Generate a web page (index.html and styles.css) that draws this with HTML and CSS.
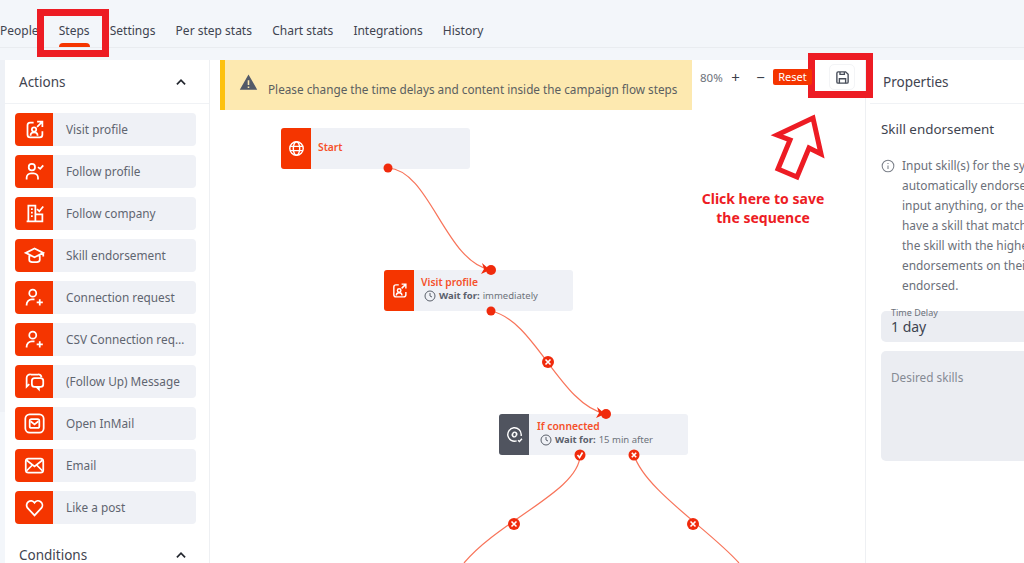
FILE: index.html
```html
<!DOCTYPE html>
<html lang="en">
<head>
  <meta charset="UTF-8">
  <meta name="viewport" content="width=device-width, initial-scale=1.0">
  <title>Campaign steps</title>
  <link rel="stylesheet" href="styles.css">
</head>
<body>
  <svg class="defs" width="0" height="0">
    <symbol id="i-visit" viewBox="0 0 24 24">
      <path d="M11 4H7a3 3 0 0 0-3 3v11a3 3 0 0 0 3 3h11a3 3 0 0 0 3-3v-4M15 3h6v6M21 3l-6 6"/>
      <circle cx="11.5" cy="12" r="2.5"/><path d="M7.500 19c0-5 8-5 8 0"/>
    </symbol>
    <symbol id="i-follow" viewBox="0 0 24 24">
      <circle cx="9" cy="7" r="3.600"/><path d="M3 21v-2a5 5 0 0 1 5-5h3a5 5 0 0 1 5 5v2M16 7l2.500 2L22 5"/>
    </symbol>
    <symbol id="i-company" viewBox="0 0 24 24">
      <path d="M3 21h19M5 21V3h8v18M13 13h8v8M8 7h2M8 11h2M8 15h2M15 7l2.500 2.500L22 4"/>
    </symbol>
    <symbol id="i-skill" viewBox="0 0 24 24">
      <path d="M12 4L2 9l10 5 10-5zM6 12v5c0 3.500 12 3.500 12 0v-5M22 9v4"/>
    </symbol>
    <symbol id="i-connect" viewBox="0 0 24 24">
      <circle cx="10" cy="7" r="4"/><path d="M3 21v-1a6 6 0 0 1 6-6h3M18 14v7M14.500 17.500h7"/>
    </symbol>
    <symbol id="i-message" viewBox="0 0 24 24">
      <path d="M8 4h8a4 4 0 0 1 4 3"/><rect x="9" y="8" width="13" height="10" rx="3"/><path d="M6 15l-3 3V8a4 4 0 0 1 5-4M17 18v3l-3-3"/>
    </symbol>
    <symbol id="i-inmail" viewBox="0 0 24 24">
      <rect x="1.500" y="1.500" width="21" height="21" rx="5"/><rect x="6.500" y="7" width="11" height="10" rx="2"/><path d="M7.500 9.500L12 13l4.500-3.500"/>
    </symbol>
    <symbol id="i-email" viewBox="0 0 24 24">
      <rect x="2" y="4" width="20" height="16" rx="3"/><path d="M3 6l9 7 9-7M3 18l6-6M21 18l-6-6"/>
    </symbol>
    <symbol id="i-heart" viewBox="0 0 24 24">
      <path d="M12 21L4 12.500a5 5 0 0 1 8-6 5 5 0 0 1 8 6z"/>
    </symbol>
    <symbol id="i-globe" viewBox="0 0 24 24">
      <circle cx="12" cy="12" r="9.500"/><ellipse cx="12" cy="12" rx="4.500" ry="9.500"/><path d="M3 9h18M3 15h18"/>
    </symbol>
    <symbol id="i-link" viewBox="0 0 24 24">
      <path d="M15 21A9.500 9.500 0 1 1 21.500 12v2M17 20l2 2 3.500-4"/><path d="M10 14a3 3 0 0 1 0-4l1-1a3 3 0 0 1 4 4M14 10a3 3 0 0 1 0 4l-1 1a3 3 0 0 1-4-4"/>
    </symbol>
    <symbol id="i-clock" viewBox="0 0 24 24">
      <circle cx="12" cy="12" r="10"/><path d="M12 6v6l4 2"/>
    </symbol>
    <symbol id="i-chevron" viewBox="0 0 24 24">
      <path d="M5 16l7-7 7 7"/>
    </symbol>
  </svg>

  <nav class="tabs">
    <a>People</a>
    <a class="tab-active">Steps</a>
    <a>Settings</a>
    <a>Per step stats</a>
    <a>Chart stats</a>
    <a>Integrations</a>
    <a>History</a>
  </nav>

  <main class="layout">
    <div class="scroll-strip"></div>
    <aside class="sidebar">
      <header class="panel-head">
        <h2>Actions</h2>
        <svg class="chevron"><use href="#i-chevron"/></svg>
      </header>
      <ul class="action-list">
        <li class="action"><span class="action-icon"><svg><use href="#i-visit"/></svg></span><span class="action-name">Visit profile</span></li>
        <li class="action"><span class="action-icon"><svg><use href="#i-follow"/></svg></span><span class="action-name">Follow profile</span></li>
        <li class="action"><span class="action-icon"><svg><use href="#i-company"/></svg></span><span class="action-name">Follow company</span></li>
        <li class="action"><span class="action-icon"><svg><use href="#i-skill"/></svg></span><span class="action-name">Skill endorsement</span></li>
        <li class="action"><span class="action-icon"><svg><use href="#i-connect"/></svg></span><span class="action-name">Connection request</span></li>
        <li class="action"><span class="action-icon"><svg><use href="#i-connect"/></svg></span><span class="action-name">CSV Connection request</span></li>
        <li class="action"><span class="action-icon"><svg><use href="#i-message"/></svg></span><span class="action-name">(Follow Up) Message</span></li>
        <li class="action"><span class="action-icon"><svg><use href="#i-inmail"/></svg></span><span class="action-name">Open InMail</span></li>
        <li class="action"><span class="action-icon"><svg><use href="#i-email"/></svg></span><span class="action-name">Email</span></li>
        <li class="action"><span class="action-icon"><svg><use href="#i-heart"/></svg></span><span class="action-name">Like a post</span></li>
      </ul>
      <header class="panel-head conditions">
        <h2>Conditions</h2>
        <svg class="chevron"><use href="#i-chevron"/></svg>
      </header>
    </aside>

    <section class="canvas">
      <div class="canvas-top">
        <div class="banner">
          <svg class="banner-icon" viewBox="0 0 24 24"><path d="M12 2L1 21h22zM11 9v6h2V9zm0 8v2h2v-2z" fill-rule="evenodd"/></svg>
          <span>Please change the time delays and content inside the campaign flow steps</span>
        </div>
        <div class="zoom-bar">
          <span class="zoom-value">80%</span>
          <span class="zoom-btn">+</span>
          <span class="zoom-btn">&minus;</span>
          <span class="reset">Reset</span>
          <span class="save">
            <svg viewBox="0 0 24 24"><path d="M5 3h12l4 4v12a2 2 0 0 1-2 2H5a2 2 0 0 1-2-2V5a2 2 0 0 1 2-2z"/><path d="M7 21v-7h10v7M8 3v4h7V3"/></svg>
          </span>
        </div>
      </div>

      <svg class="edges" viewBox="210 60 814 503">
        <path d="M388 168C430 170 445 262 491 270"/>
        <path d="M491 311C535 320 560 405 606 414"/>
        <path d="M580 455C580 490 500 520 464 563"/>
        <path d="M634 455C645 490 710 530 739 563"/>
        <circle cx="388" cy="168" r="4.500"/>
        <circle cx="491" cy="270" r="5"/>
        <path class="edge-tip" d="M482 263l8 7-9 4 3-5z"/>
        <circle cx="491" cy="311" r="4.500"/>
        <circle cx="606" cy="414" r="5"/>
        <path class="edge-tip" d="M597 407l8 7-9 4 3-5z"/>
        <g class="edge-mark"><circle cx="548" cy="362" r="6"/><path d="M545.500 359.500l5 5M550.500 359.500l-5 5"/></g>
        <g class="edge-mark"><circle cx="580" cy="455" r="5.500"/><path d="M577.500 455l2 2.500 3-5"/></g>
        <g class="edge-mark"><circle cx="634" cy="455" r="5.500"/><path d="M631.800 452.800l4.400 4.400M636.200 452.800l-4.400 4.400"/></g>
        <g class="edge-mark"><circle cx="514" cy="524" r="6"/><path d="M511.500 521.500l5 5M516.500 521.500l-5 5"/></g>
        <g class="edge-mark"><circle cx="693" cy="524" r="6"/><path d="M690.500 521.500l5 5M695.500 521.500l-5 5"/></g>
      </svg>

      <div class="node node-start">
        <span class="node-icon"><svg><use href="#i-globe"/></svg></span>
        <div class="node-body"><div class="node-title">Start</div></div>
      </div>
      <div class="node node-visit">
        <span class="node-icon"><svg><use href="#i-visit"/></svg></span>
        <div class="node-body">
          <div class="node-title">Visit profile</div>
          <div class="node-wait"><svg><use href="#i-clock"/></svg><b>Wait for:</b>immediately</div>
        </div>
      </div>
      <div class="node node-connected">
        <span class="node-icon node-icon-dark"><svg><use href="#i-link"/></svg></span>
        <div class="node-body">
          <div class="node-title">If connected</div>
          <div class="node-wait"><svg><use href="#i-clock"/></svg><b>Wait for:</b>15 min after</div>
        </div>
      </div>

      <svg class="callout-arrow" viewBox="0 0 60 76"><path d="M44 5L8 22l13 5-12 29 19 8 12-29 12 6z"/></svg>
      <p class="callout-text">Click here to save<br>the sequence</p>
    </section>

    <aside class="properties">
      <header class="panel-head">
        <h2>Properties</h2>
      </header>
      <div class="prop-body">
        <h3>Skill endorsement</h3>
        <div class="prop-help">
          <svg class="info" viewBox="0 0 24 24"><circle cx="12" cy="12" r="10"/><path d="M12 11v6M12 7v1.500"/></svg>
          <p>Input skill(s) for the system to<br>automatically endorse. If you don't<br>input anything, or the profile doesn't<br>have a skill that matches, we'll pick<br>the skill with the highest number of<br>endorsements on their profile to be<br>endorsed.</p>
        </div>
        <div class="field field-delay">
          <label>Time Delay</label>
          <span>1 day</span>
        </div>
        <div class="field field-skills">Desired skills</div>
      </div>
    </aside>
  </main>

  <div class="highlight highlight-tab"></div>
  <div class="highlight highlight-save"></div>
</body>
</html>
```

FILE: styles.css
```css
:root {
  --orange: #f53500;
  --node-bg: #eff1f6;
  --ink: #3f4450;
  --muted: #5f6570;
  --red: #ed1c24;
}

* {
  box-sizing: border-box;
}

html,
body {
  margin: 0;
  padding: 0;
}

body {
  position: relative;
  width: 1024px;
  height: 563px;
  overflow: hidden;
  background: #f3f6fa;
  color: var(--ink);
  font-family: "Noto Sans", "Open Sans", sans-serif;
}

.defs {
  position: absolute;
}

.tabs {
  display: flex;
  gap: 20.200px;
  height: 48px;
  border-bottom: 1px solid #e9ecf0;
  font-size: 12px;
  line-height: 17px;
  padding-top: 22px;
}

.tabs a {
  position: relative;
  white-space: nowrap;
}

.tab-active::after {
  content: "";
  position: absolute;
  left: 0;
  right: 0;
  top: 21px;
  height: 4px;
  border-radius: 4px 4px 0 0;
  background: var(--orange);
}

.layout {
  display: flex;
  height: 503px;
  margin-top: 12px;
  padding-left: 5px;
  position: relative;
}

.scroll-strip {
  position: absolute;
  left: 0;
  top: 0;
  width: 5px;
  height: 352px;
  background: #eef1f6;
}

.sidebar {
  width: 205px;
  flex: none;
  background: #fff;
  border-right: 1px solid #eef0f3;
  overflow: hidden;
}

.panel-head {
  display: flex;
  align-items: center;
  justify-content: space-between;
  height: 44px;
  padding: 0 21px 0 14px;
  border-bottom: 1px solid #f0f2f5;
}

.panel-head h2 {
  margin: 0;
  font-size: 13.500px;
  font-weight: 400;
}

.chevron {
  width: 14px;
  height: 14px;
  fill: none;
  stroke: #23272f;
  stroke-width: 3;
}

.action-list {
  list-style: none;
  margin: 0;
  padding: 9px 13px 0 10px;
}

.action {
  display: flex;
  height: 33px;
  margin-bottom: 9px;
  border-radius: 4px;
  background: var(--node-bg);
  overflow: hidden;
}

.action-icon {
  flex: none;
  display: flex;
  align-items: center;
  justify-content: center;
  width: 38px;
  background: var(--orange);
}

.action-icon svg {
  width: 21px;
  height: 21px;
  fill: none;
  stroke: #fff;
  stroke-width: 2;
}

.action-name {
  flex: 1;
  min-width: 0;
  padding: 0 9px 0 13px;
  font-size: 11.800px;
  line-height: 32px;
  color: var(--muted);
  white-space: nowrap;
  overflow: hidden;
  text-overflow: ellipsis;
}

.conditions {
  border-bottom: 0;
}

.canvas {
  position: relative;
  width: 656px;
  flex: none;
  background: #fff;
  border-right: 1px solid #eef0f3;
}

.canvas-top {
  display: flex;
  position: relative;
  z-index: 2;
  padding-left: 10px;
}

.banner {
  display: flex;
  align-items: center;
  width: 472px;
  height: 50px;
  padding-left: 14px;
  border-left: 5px solid #fdc10d;
  background: #fde9b0;
  font-size: 11.750px;
  color: #5b5f60;
}

.banner-icon {
  width: 19px;
  height: 19px;
  margin: -6px 10px 0 0;
  fill: #535a68;
}

.banner span {
  padding-top: 7px;
}

.zoom-bar {
  display: flex;
  align-items: center;
  height: 34px;
  padding-left: 8px;
  font-size: 11.500px;
  color: #6d727b;
}

.zoom-value {
  width: 23px;
}

.zoom-btn {
  width: 25px;
  text-align: center;
  font-size: 15px;
  color: #3c404a;
}

.reset {
  width: 39px;
  height: 16px;
  border-radius: 2px;
  background: var(--orange);
  color: #fff;
  font-size: 11px;
  line-height: 16px;
  text-align: center;
}

.save {
  display: flex;
  align-items: center;
  justify-content: center;
  width: 26px;
  height: 26px;
  margin-left: 17px;
  border: 1px solid #f3f4f6;
  border-radius: 5px;
}

.save svg {
  width: 15px;
  height: 15px;
  fill: none;
  stroke: #474d59;
  stroke-width: 2.200;
}

.edges {
  position: absolute;
  left: 0;
  top: 0;
  z-index: 1;
  width: 814px;
  height: 503px;
  overflow: hidden;
  pointer-events: none;
}

.edges path {
  fill: none;
  stroke: #f8745a;
  stroke-width: 1.200;
}

.edges circle {
  fill: #f02a0c;
}

.edges .edge-tip {
  fill: #f02a0c;
  stroke: none;
}

.edges .edge-mark path {
  stroke: #fff;
  stroke-width: 1.600;
}

.node {
  position: absolute;
  display: flex;
  width: 189px;
  height: 41px;
  border-radius: 3px;
  background: var(--node-bg);
  overflow: hidden;
}

.node-start {
  left: 71px;
  top: 68px;
}

.node-visit {
  left: 174px;
  top: 210px;
}

.node-connected {
  left: 289px;
  top: 354px;
}

.node-connected .node-body {
  padding-left: 8px;
}

.node-icon {
  flex: none;
  display: flex;
  align-items: center;
  justify-content: center;
  width: 30px;
  background: var(--orange);
}

.node-icon-dark {
  background: #50545f;
}

.node-icon svg {
  width: 17px;
  height: 17px;
  fill: none;
  stroke: #fff;
  stroke-width: 2;
}

.node-body {
  display: flex;
  flex-direction: column;
  justify-content: center;
  padding: 0 0 3px 7px;
  min-width: 0;
}

.node-title {
  font-size: 10.300px;
  font-weight: 600;
  line-height: 14px;
  color: #f5502a;
}

.node-wait {
  display: flex;
  align-items: center;
  gap: 3px;
  margin-left: 3px;
  font-size: 9.500px;
  line-height: 14px;
  color: #6d727b;
  white-space: pre;
}

.node-wait b {
  font-weight: 700;
  color: #5a606b;
}

.node-wait svg {
  width: 12px;
  height: 12px;
  fill: none;
  stroke: #5a606b;
  stroke-width: 2;
}

.callout-arrow {
  position: absolute;
  left: 559px;
  top: 53px;
  width: 60px;
  height: 76px;
  fill: #fff;
  stroke: var(--red);
  stroke-width: 5;
}

.callout-text {
  position: absolute;
  left: 473px;
  top: 129px;
  width: 160px;
  margin: 0;
  color: var(--red);
  font-size: 14px;
  font-weight: 700;
  line-height: 19px;
  text-align: center;
}

.properties {
  flex: none;
  width: 300px;
  background: #fff;
}

.properties .panel-head {
  margin-left: 4px;
  padding-left: 13px;
}

.prop-body {
  padding: 15px 0 0 15px;
}

.prop-body h3 {
  margin: 0 0 16px;
  font-size: 13.400px;
  font-weight: 400;
  line-height: 20px;
}

.prop-help {
  display: flex;
  height: 156px;
  color: #6b7079;
}

.prop-help p {
  margin: 0;
  font-size: 11.900px;
  line-height: 20px;
  white-space: nowrap;
}

.info {
  flex: none;
  width: 14px;
  height: 14px;
  margin: 4px 7px 0 0;
  fill: none;
  stroke: #7c818a;
  stroke-width: 1.800;
}

.field {
  border-radius: 5px;
  background: #ebedf2;
  padding-left: 10px;
}

.field-delay {
  position: relative;
  height: 31px;
  padding-top: 6px;
  font-size: 14px;
  line-height: 20px;
}

.field-delay label {
  position: absolute;
  left: 10px;
  top: -4px;
  font-size: 9px;
  line-height: 12px;
  color: #6d727b;
}

.field-skills {
  height: 110px;
  margin-top: 9px;
  padding-top: 17px;
  font-size: 11.800px;
  line-height: 18px;
  color: #858a94;
}

.highlight {
  position: absolute;
  border: 7px solid var(--red);
}

.highlight-tab {
  left: 37px;
  top: 9px;
  width: 72px;
  height: 48px;
}

.highlight-save {
  left: 808px;
  top: 53px;
  width: 65px;
  height: 45px;
}
```
